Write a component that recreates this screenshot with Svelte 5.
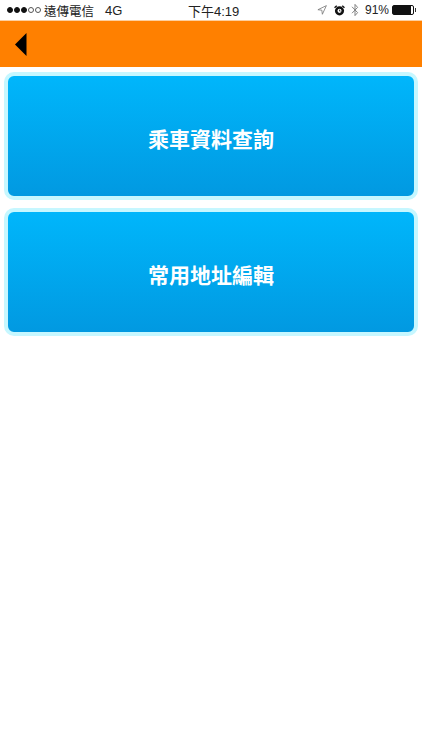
<script lang="ts">
  const items = ["乘車資料查詢", "常用地址編輯"];
</script>

<div class="screen">
  <div class="status">
    <div class="left">
      <span class="dots">
        <i class="on"></i><i class="on"></i><i class="on"></i><i></i><i></i>
      </span>
      <span class="carrier">遠傳電信</span>
      <span class="net">4G</span>
    </div>
    <div class="time">下午4:19</div>
    <div class="right">
      <svg class="loc" width="10" height="10" viewBox="0 0 11 11">
        <path d="M10.3.7 1 5.2l4.3.5.6 4.5z" fill="none" stroke="#777" stroke-width=".9" stroke-linejoin="round" />
      </svg>
      <svg class="alarm" width="11" height="11" viewBox="0 0 12 12">
        <circle cx="6" cy="6.4" r="5" fill="#111" />
        <circle cx="6" cy="6.4" r="2.2" fill="#fff" />
        <path d="M6 5v1.6h1.2" fill="none" stroke="#111" stroke-width=".8" />
        <path d="M.6 3 3 .8M11.4 3 9 .8" stroke="#111" stroke-width="1.5" />
      </svg>
      <svg class="bt" width="8" height="14" viewBox="0 0 8 14">
        <path d="M1 3.8 6.6 9.6 4 12.6V1.4l2.6 3L1 10.2" fill="none" stroke="#777" stroke-width=".9" />
      </svg>
      <span class="pct">91%</span>
      <span class="battery"><span class="level"></span></span>
      <span class="nub"></span>
    </div>
  </div>

  <header class="bar">
    <button class="back" aria-label="返回">
      <svg width="12" height="23" viewBox="0 0 12 23"><path d="M11.5 0v23L0 11.5z" fill="#000" /></svg>
    </button>
  </header>

  <main class="menu">
    {#each items as item}
      <button class="menu-btn">{item}</button>
    {/each}
  </main>
</div>

<style>
  :global(body) {
    margin: 0;
    background: #fff;
  }

  .screen {
    width: 422px;
    height: 750px;
    overflow: hidden;
    background: #fff;
    font-family: "Liberation Sans", "Noto Sans CJK TC", sans-serif;
  }

  .status {
    height: 20px;
    padding: 0 6px 0 7px;
    display: grid;
    grid-template-columns: 181px auto 1fr;
    align-items: center;
    font-size: 13px;
    color: #222;
    box-sizing: border-box;
  }

  .left,
  .right {
    display: flex;
    align-items: center;
  }

  .right {
    justify-content: flex-end;
  }

  .dots {
    display: flex;
    gap: 1px;
    margin-right: 3px;
  }

  .dots i {
    width: 6px;
    height: 6px;
    box-sizing: border-box;
    border: 1px solid #555;
    border-radius: 50%;
  }

  .dots i.on {
    background: #111;
    border-color: #111;
  }

  .carrier {
    font-size: 12.5px;
  }

  .net {
    margin-left: 11px;
  }

  .loc {
    margin-right: 7px;
  }

  .alarm {
    margin-right: 6px;
  }

  .bt {
    margin-right: 6px;
  }

  .pct {
    font-size: 12px;
    margin-right: 3px;
  }

  .battery {
    width: 22px;
    height: 10px;
    box-sizing: border-box;
    border: 1px solid #111;
    border-radius: 2px;
    display: flex;
  }

  .level {
    width: 91%;
    background: #111;
  }

  .nub {
    width: 1px;
    height: 4px;
    margin-left: 1px;
    background: #333;
  }

  .bar {
    height: 47px;
    box-sizing: border-box;
    border-top: 1px solid #fdcf9f;
    background: #ff8000;
    display: flex;
    align-items: center;
    padding-left: 15px;
  }

  .back {
    border: 0;
    padding: 0;
    background: none;
    display: flex;
  }

  .menu {
    padding: 5px 4px 0;
    display: flex;
    flex-direction: column;
    gap: 8px;
  }

  .menu-btn {
    height: 128px;
    box-sizing: border-box;
    border: 4px solid #c6f7ff;
    border-radius: 10px;
    background: linear-gradient(#00b6fb, #0199e1);
    color: #fff;
    font-family: inherit;
    font-size: 21px;
    font-weight: 700;
    padding: 4px 0 0;
  }
</style>
